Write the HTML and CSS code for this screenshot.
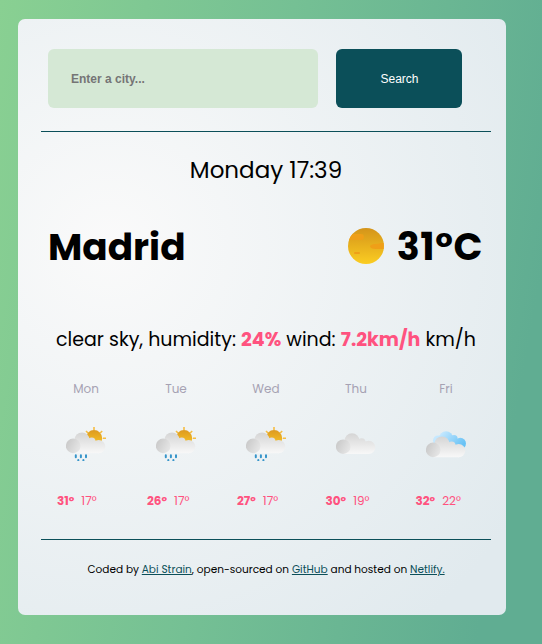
FILE: index.html
```html
<!DOCTYPE html>
<html lang="en">
<head>
<meta charset="utf-8">
<title>Weather</title>
<link rel="stylesheet" href="styles.css">
</head>
<body>
<svg class="defs" width="0" height="0" aria-hidden="true">
  <defs>
    <linearGradient id="sun" x1="0" y1="0" x2="0" y2="1"><stop offset="0" stop-color="#d4941a"/><stop offset="1" stop-color="#fbcd22"/></linearGradient>
    <linearGradient id="sun-small" x1="0" y1="0" x2="0" y2="1"><stop offset="0" stop-color="#dd9a20"/><stop offset="1" stop-color="#fbc926"/></linearGradient>
    <linearGradient id="cloud" gradientUnits="userSpaceOnUse" x1="0" y1="7" x2="0" y2="27"><stop offset="0" stop-color="#d6d6d6"/><stop offset="1" stop-color="#f8f8f8"/></linearGradient>
    <linearGradient id="puff" x1="0" y1="0.2" x2="1" y2="0.7"><stop offset="0" stop-color="#c8c8c8"/><stop offset="1" stop-color="#e7e7e7"/></linearGradient>
    <linearGradient id="blue" gradientUnits="userSpaceOnUse" x1="16" y1="2" x2="34" y2="18"><stop offset="0" stop-color="#c5e8ff"/><stop offset="1" stop-color="#68c2f5"/></linearGradient>
    <symbol id="cloud-shape" viewBox="0 0 40 34">
      <g fill="url(#cloud)"><circle cx="16" cy="13.700" r="7.500"/><circle cx="25.700" cy="15" r="3.800"/><circle cx="32.700" cy="20.400" r="6.600"/><path d="M7 14H29L33 18V27H7Z"/></g>
      <circle cx="7.200" cy="19.700" r="7.300" fill="url(#puff)"/>
    </symbol>
    <symbol id="rain" viewBox="0 0 40 34">
      <path stroke="#f5bd45" stroke-width="1.600" d="M28 0v3M20 4l2 2M36.200 4l-2 2M37 11.200h3"/>
      <circle cx="28" cy="11.200" r="8.200" fill="url(#sun-small)"/>
      <use href="#cloud-shape" y="-0.800" width="40" height="34"/>
      <path stroke="#3795ca" stroke-width="2" stroke-linecap="round" d="M9.800 28.200v2M14.900 28.200v2M20 28.200v2M12.300 33v1M17.400 33v1"/>
    </symbol>
    <symbol id="clouds" viewBox="0 0 40 34">
      <g fill="url(#blue)"><circle cx="20" cy="8.200" r="7"/><circle cx="12" cy="10.500" r="5"/><circle cx="28" cy="8.500" r="3.600"/><circle cx="34.300" cy="13.500" r="5.700"/><path d="M12 9H30L35 12V19L14 20Z"/></g>
      <use href="#cloud-shape" y="0.200" width="40" height="34"/>
    </symbol>
  </defs>
</svg>
<main class="card">
  <form class="search">
    <input class="city-input" type="text" placeholder="Enter a city...">
    <button class="submit" type="button">Search</button>
  </form>
  <div class="date"><span>Monday 17:39</span></div>
  <div class="current">
    <h1 class="city">Madrid</h1>
    <div class="now">
      <svg class="sun" viewBox="0 0 36 36"><circle cx="18" cy="18" r="18" fill="url(#sun)"/><g fill="#ef9f18"><path d="M4.500 6H13a3 3 0 0 1 0 6H1.200Q2 8.500 4.500 6Z"/><path d="M35.700 15H32Q31 16 27 16Q22 16.500 22 18.500Q23 21 28 21H35.700Z"/><rect x="6" y="24" width="6" height="2" rx="1"/></g></svg>
      <h1 class="temp">31°C</h1>
    </div>
  </div>
  <p class="details"><span>clear sky, humidity: <strong>24%</strong> wind: <strong>7.2km/h</strong> km/h</span></p>
  <section class="forecast">
    <div class="day"><span class="name">Mon</span><svg class="icon"><use href="#rain"/></svg><span class="temps"><b>31°</b><span>17°</span></span></div>
    <div class="day"><span class="name">Tue</span><svg class="icon"><use href="#rain"/></svg><span class="temps"><b>26°</b><span>17°</span></span></div>
    <div class="day"><span class="name">Wed</span><svg class="icon"><use href="#rain"/></svg><span class="temps"><b>27°</b><span>17°</span></span></div>
    <div class="day"><span class="name">Thu</span><svg class="icon"><use href="#cloud-shape"/></svg><span class="temps wide"><b>30°</b><span>19°</span></span></div>
    <div class="day"><span class="name">Fri</span><svg class="icon broken"><use href="#clouds"/></svg><span class="temps wide"><b>32°</b><span>22°</span></span></div>
  </section>
  <footer class="footer"><span>Coded by <a href="#">Abi Strain</a>, open-sourced on <a href="#">GitHub</a> and hosted on <a href="#">Netlify.</a></span></footer>
</main>
</body>
</html>
```
FILE: styles.css
```css
* { box-sizing: border-box; }
body {
  margin: 0;
  height: 644px;
  padding: 19px 36px 29px 18px;
  overflow: hidden;
  font-family: Poppins, Inter, sans-serif;
  background: linear-gradient(100deg, #89d092 0%, #75c094 45%, #60ad92 90%);
}
.defs { display: block; height: 0; }
.card {
  display: flex;
  flex-direction: column;
  height: 596px;
  padding: 30px 15px 0 23px;
  border-radius: 7px;
  background: radial-gradient(circle at 18.700% 37.800%, rgb(250, 250, 250) 0%, rgb(225, 234, 238) 90%);
}
.search {
  display: flex;
  gap: 18px;
  height: 83px;
  padding: 0 7px;
  border-bottom: 1px solid #0b4f59;
}
.city-input, .submit {
  height: 59px;
  border: 0;
  border-radius: 6px;
  font: 12px "Liberation Sans", sans-serif;
}
.city-input {
  width: 270px;
  padding: 0 23px;
  font-weight: 700;
  background: #d5e8d5;
}
.city-input::placeholder { color: #757575; }
.submit { width: 126px; padding: 0 0 0 1px; color: #fff; background: #0b4f59; }
.date {
  height: 76px;
  line-height: 76px;
  text-align: center;
  font-size: 23px;
}
.current {
  display: flex;
  justify-content: space-between;
  align-items: center;
  height: 76px;
  padding: 0 8px 0 7px;
}
.city, .temp { margin: 0; padding-top: 3px; line-height: 73px; font-weight: 700; }
.city { font-size: 37.400px; }
.temp { font-size: 38px; line-height: 71px; padding-bottom: 2px; letter-spacing: 0.600px; }
.now { display: flex; align-items: center; gap: 13px; }
.sun { width: 36px; height: 36px; }
.details {
  height: 32px;
  margin: 40px 0 -1px;
  line-height: 32px;
  font-size: 19px;
  text-align: center;
  white-space: nowrap;
}
.details strong { color: #ff527f; }
.forecast { display: grid; grid-template-columns: repeat(5, 90px); height: 185px; padding-top: 22px; border-bottom: 1px solid #0b4f59; }
.day { display: flex; flex-direction: column; align-items: center; }
.name { height: 24px; line-height: 24px; font-size: 12px; color: #a6a2b3; }
.icon { width: 40px; height: 34px; margin: 26px 0 28px; overflow: visible; }
.icon.broken { margin: 29px 0 25px; }
.temps { display: flex; gap: 7px; width: 58px; line-height: 24px; font-size: 12px; color: #ff527f; }
.temps.wide { width: 61px; }
.footer { height: 60px; line-height: 60px; text-align: center; font-size: 10.560px; white-space: nowrap; }
.footer a { color: #0b4f59; text-decoration: underline; }
```
